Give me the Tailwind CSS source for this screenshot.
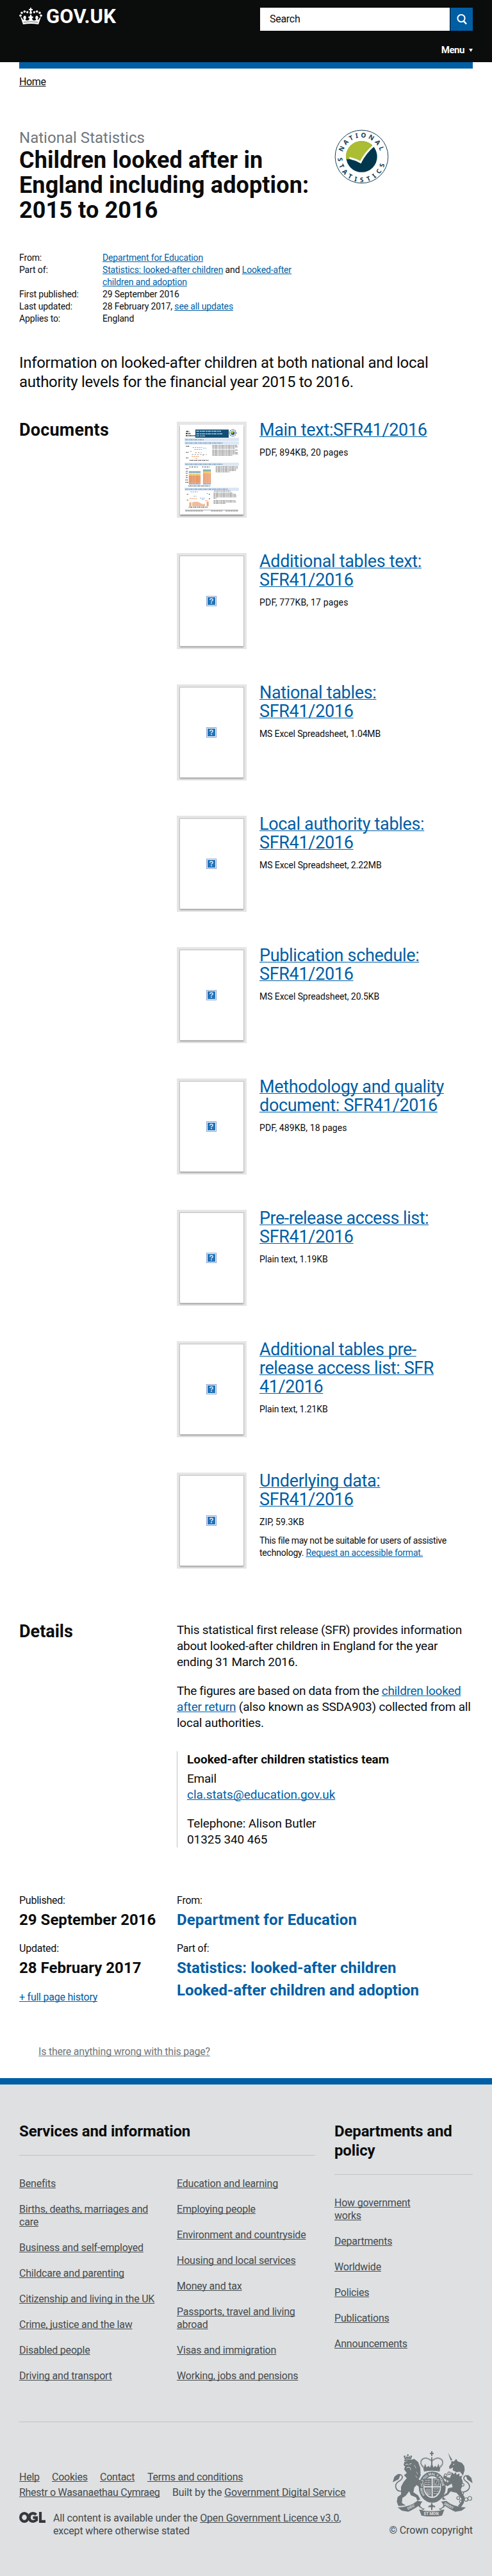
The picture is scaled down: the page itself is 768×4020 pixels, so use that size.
<!DOCTYPE html>
<html lang="en">
<head>
<meta charset="utf-8">
<title>Children looked after in England including adoption: 2015 to 2016 - GOV.UK</title>
<script src="https://cdn.jsdelivr.net/npm/@tailwindcss/browser@4"></script>
</head>
<body class="w-[768px] bg-white font-[Roboto,Arial,sans-serif] text-[#0b0c0c] [text-decoration-skip-ink:none]">

<svg class="hidden">
  <symbol id="missing" viewBox="0 0 16 16">
    <rect width="16" height="16" fill="#7f9fce"/><rect x="1" y="1" width="14" height="14" fill="#fff"/><rect x="2" y="2" width="12" height="12" fill="#2273b9"/>
    <path d="M5.8 6.2V5.6Q6 4.3 8 4.3T10.2 6Q10.200 7 9 7.600T8 9.200" fill="none" stroke="#e8f1fa" stroke-width="1.500"/><rect x="7.100" y="10.300" width="1.800" height="1.600" fill="#e8f1fa"/>
  </symbol>
</svg>

<header class="h-[97px] bg-[#0b0c0c] px-[30px] pt-3">
  <div class="flex h-9 items-start justify-between">
    <a class="flex items-start text-white" href="#">
      <svg class="h-[26px] w-9" viewBox="18 12 108 78" fill="#fff">
        <path d="M69 12h6v6h6v6h-6v6h-6v-6h-6v-6h6z"/>
        <circle cx="72" cy="35" r="6"/><circle cx="56" cy="33" r="5"/><circle cx="43" cy="30" r="5.500"/><circle cx="30" cy="36" r="5.500"/><circle cx="24" cy="49" r="5.500"/>
        <circle cx="88" cy="33" r="5"/><circle cx="101" cy="30" r="5.500"/><circle cx="114" cy="36" r="5.500"/><circle cx="120" cy="49" r="5.500"/>
        <path d="M24 55L36 90Q72 84 108 90L120 55L113 60Q107 74 103 65L108 61L104 50H96L93 62L98 65Q96 74 86 72Q78 70 78 61H83V53H77L74 44H70L67 53H61V61H66Q66 70 58 72Q48 74 46 65L51 62L48 50H40L36 61L41 65Q37 74 31 60Z"/>
        <path d="M38 80Q72 75 106 80" stroke="#0b0c0c" stroke-width="2" fill="none"/>
      </svg>
      <span class="-mt-[4px] ml-[6px] text-[31px] leading-[36px] font-bold tracking-[0.004em]">GOV.UK</span>
    </a>
    <div class="flex gap-[1px]">
      <div class="h-9 w-[296px] bg-white pl-[15px] text-base leading-9 tracking-[-0.017em]">Search</div>
      <div class="flex h-9 w-[35px] items-center justify-center bg-[#005ea5]">
        <svg class="h-[18px] w-[18px]" viewBox="0 0 18 18" fill="none" stroke="#fff"><circle cx="8" cy="7.500" r="5.600" stroke-width="2"/><path d="M11.500 11.500L16 16.500" stroke-width="2.600"/></svg>
      </div>
    </div>
  </div>
  <div class="mt-5 flex h-5 items-center justify-end gap-[7px] text-sm leading-5 font-bold text-white"><span class="text-[15px] tracking-[-0.03em]">Menu</span>
    <svg class="h-[5px] w-[6px]" viewBox="0 0 6 5"><path d="M0 0h6L3 5z" fill="#fff"/></svg></div>
</header>

<div class="px-[30px]">
  <div class="h-[10px] bg-[#005ea5]"></div>
  <nav class="mt-[11px] text-base leading-5 tracking-[-0.024em]"><a href="#" class="underline decoration-1 underline-offset-1">Home</a></nav>

  <main>
    <div class="mt-[62px] flex h-[147px]">
      <div class="w-[492px] whitespace-nowrap">
        <p class="text-[24px] leading-[30px] tracking-[0.001em] text-[#6f777b]">National Statistics</p>
        <h1 class="mt-px text-[36px] leading-[39px] font-bold tracking-[0.003em]">Children looked after in<br>England including adoption:<br>2015 to 2016</h1>
      </div>
      <svg class="mt-[2px] h-[85px] w-[85px]" viewBox="64 64 256 256">
        <circle cx="192" cy="192" r="124.500" fill="#fff" stroke="#0f3c52" stroke-width="3"/>
        <circle cx="192" cy="192" r="73" fill="#00374d"/>
        <path d="M119 203A73 73 0 0 1 243 140Q213 166 187 213Q160 201 134 196L132 205Z" fill="#aabd33"/>
        <path d="M134 198Q162 204 187 218Q210 173 249 140" fill="none" stroke="#fff" stroke-width="9"/>
        <path id="ns-top" d="M104 171A90.500 90.500 0 0 1 280 171" fill="none"/>
        <path id="ns-bot" d="M80 199A112 112 0 0 0 304 199" fill="none"/>
        <text font-family="Noto Sans" font-weight="700" font-size="30" letter-spacing="11" fill="#0f3c52"><textPath href="#ns-top">NATIONAL</textPath></text>
        <text font-family="Noto Sans" font-weight="700" font-size="30" letter-spacing="18" fill="#0f3c52"><textPath href="#ns-bot">STATISTICS</textPath></text>
      </svg>
    </div>

    <dl class="mt-[46px] grid grid-cols-[130px_1fr] text-sm leading-[19px] tracking-[-0.01em] whitespace-nowrap [&_a]:text-[#005ea5] [&_a]:underline [&_a]:decoration-1 [&_a]:underline-offset-1">
      <dt>From:</dt><dd><a href="#">Department for Education</a></dd>
      <dt>Part of:</dt><dd><a href="#">Statistics: looked-after children</a> and <a href="#">Looked-after<br>children and adoption</a></dd>
      <dt>First published:</dt><dd>29 September 2016</dd>
      <dt>Last updated:</dt><dd>28 February 2017, <a href="#">see all updates</a></dd>
      <dt>Applies to:</dt><dd>England</dd>
    </dl>

    <p class="mt-11 text-2xl leading-[30px] tracking-[-0.013em] whitespace-nowrap">Information on looked-after children at both national and local<br>authority levels for the financial year 2015 to 2016.</p>

    <section class="mt-[46px] flex">
      <h2 class="w-[246px] text-[27px] leading-[29px] font-bold tracking-[0.008em]">Documents</h2>
      <div class="[&_a]:text-[#005ea5] [&_a]:underline [&_a]:decoration-1 [&_a]:underline-offset-1 [&_article]:flex [&_article]:h-[205px] [&_article]:gap-5 [&_h3]:text-[27px] [&_h3]:leading-[29px] [&_h3]:tracking-[-0.012em] [&_h3]:whitespace-nowrap [&_p]:text-sm [&_p]:leading-[19px] [&_p]:whitespace-nowrap">
        <article>
          <div class="mt-px h-[150px] w-[109px] bg-[#e6e6e6] p-[5px]">
            <svg class="h-[140px] w-[99px] shadow-[0_2px_2px_rgba(0,0,0,0.4)]" viewBox="63 69 297 420">
              <rect x="63" y="69" width="297" height="420" fill="#fff"/>
              <path d="M92 100h14M90 110h22M90 120h44" stroke="#222" stroke-width="5" stroke-dasharray="9 3 5 2"/>
              <rect x="135" y="91" width="156" height="38" fill="#104e75"/>
              <path d="M139 99h116M139 111h124M139 121h42" stroke="#b8cfdf" stroke-width="4" stroke-dasharray="14 3 8 2"/>
              <circle cx="310" cy="107" r="15" fill="none" stroke="#0f3c52" stroke-width="4" stroke-dasharray="4 4"/><circle cx="310" cy="107" r="9" fill="#0f4c66"/><path d="M301 107a9 9 0 0 1 15-6l-7 10z" fill="#aabd33"/>
              <g fill="#dbe7f4" stroke="#c6d9ec"><rect x="85" y="131" width="253" height="13"/><rect x="85" y="148" width="253" height="13"/><rect x="85" y="247" width="253" height="13"/><rect x="85" y="364" width="253" height="13"/></g>
              <path d="M88 139h88M88 154h174M88 253h176M88 370h200" stroke="#4c7da3" stroke-width="3" stroke-dasharray="12 3 5 2"/>
              <path d="M214 166h116M214 172h119M214 178h108M214 187h120M214 193h108M214 199h120M214 205h122M214 211h95M230 265h103M230 271h105M230 277h98M230 283h96M230 289h66M222 379h78M220 388h90M220 394h104M220 400h108M220 406h108M220 412h14M220 424h102M220 430h107M220 436h57" stroke="#606060" stroke-width="2.500" stroke-dasharray="8 2 13 2 5 2"/>
              <path d="M90 169h16M91 198h12M91 224h11M108 235h88M90 274h12M90 286h10M90 295h10M90 307h10M90 316h10M88 327h12M88 338h14M102 355h103M95 394h8M95 421h8M198 394h6M198 415h6M104 454h88" stroke="#333" stroke-width="3" stroke-dasharray="5 2 9 3"/>
              <path d="M122 175h45M130 184h36M110 193h8M172 178h14M112 383h34M188 391h8M126 403h14M156 412h24M165 418h12" stroke="#78a9da" stroke-width="3" stroke-dasharray="7 3"/>
              <path d="M118 217h34M136 226h10M168 211h8M108 414h34M182 424h12" stroke="#e98543" stroke-width="3" stroke-dasharray="6 3"/>
              <path d="M134 199h30M118 208h70" stroke="#999" stroke-width="3" stroke-dasharray="7 6"/>
              <g fill="none" stroke-dasharray="4 1.500"><path d="M105 345h55M171 345h36" stroke="#6f9dcc" stroke-width="7"/><path d="M105 323h55" stroke="#e07a3b" stroke-width="37"/><path d="M171 318h36" stroke="#e58b55" stroke-width="46"/><path d="M105 300h55M171 291h36" stroke="#e8bb36" stroke-width="8"/><path d="M105 291h55M171 284h36" stroke="#588fca" stroke-width="6"/><path d="M105 288h55M171 280h36" stroke="#77aa58" stroke-width="5"/></g>
              <path d="M108 266h38M168 266h34" stroke="#566" stroke-width="6" stroke-dasharray="3 5 2 2"/>
              <path d="M109 450v-18M114 450v-18M123 450v-19M129 450v-21M135 450v-20M141 450v-21M147 450v-20M153 450v-18M159 450v-14M165 450v-12M171 450v-9M177 450v-12M190 450v-22M195 450v-22" stroke="#eb9a68" stroke-width="4"/>
              <path d="M86 468h250" stroke="#777" stroke-width="2"/><path d="M88 472h82M208 472h54M276 472h60" stroke="#555" stroke-width="2.500" stroke-dasharray="10 2"/>
            </svg>
          </div>
          <div><h3><a href="#">Main text:SFR41/2016</a></h3><p class="mt-[11px] tracking-[0.013em]">PDF, 894KB, 20 pages</p></div>
        </article>
        <article>
          <div class="mt-px h-[150px] w-[109px] bg-[#e6e6e6] p-[5px]"><div class="flex h-[140px] w-[99px] items-center justify-center bg-white shadow-[0_0_1px_1px_#c2c4c4,0_2px_2px_rgba(0,0,0,0.4)]"><svg class="mr-[1px] size-4"><use href="#missing"/></svg></div></div>
          <div><h3><a href="#">Additional tables text:<br>SFR41/2016</a></h3><p class="mt-[11px] tracking-[0.013em]">PDF, 777KB, 17 pages</p></div>
        </article>
        <article>
          <div class="mt-px h-[150px] w-[109px] bg-[#e6e6e6] p-[5px]"><div class="flex h-[140px] w-[99px] items-center justify-center bg-white shadow-[0_0_1px_1px_#c2c4c4,0_2px_2px_rgba(0,0,0,0.4)]"><svg class="mr-[1px] size-4"><use href="#missing"/></svg></div></div>
          <div><h3><a href="#">National tables:<br>SFR41/2016</a></h3><p class="mt-[11px] tracking-[-0.010em]">MS Excel Spreadsheet, 1.04MB</p></div>
        </article>
        <article>
          <div class="mt-px h-[150px] w-[109px] bg-[#e6e6e6] p-[5px]"><div class="flex h-[140px] w-[99px] items-center justify-center bg-white shadow-[0_0_1px_1px_#c2c4c4,0_2px_2px_rgba(0,0,0,0.4)]"><svg class="mr-[1px] size-4"><use href="#missing"/></svg></div></div>
          <div><h3><a href="#">Local authority tables:<br>SFR41/2016</a></h3><p class="mt-[11px] tracking-[-0.006em]">MS Excel Spreadsheet, 2.22MB</p></div>
        </article>
        <article>
          <div class="mt-px h-[150px] w-[109px] bg-[#e6e6e6] p-[5px]"><div class="flex h-[140px] w-[99px] items-center justify-center bg-white shadow-[0_0_1px_1px_#c2c4c4,0_2px_2px_rgba(0,0,0,0.4)]"><svg class="mr-[1px] size-4"><use href="#missing"/></svg></div></div>
          <div><h3><a href="#">Publication schedule:<br>SFR41/2016</a></h3><p class="mt-[11px] tracking-[-0.006em]">MS Excel Spreadsheet, 20.5KB</p></div>
        </article>
        <article>
          <div class="mt-px h-[150px] w-[109px] bg-[#e6e6e6] p-[5px]"><div class="flex h-[140px] w-[99px] items-center justify-center bg-white shadow-[0_0_1px_1px_#c2c4c4,0_2px_2px_rgba(0,0,0,0.4)]"><svg class="mr-[1px] size-4"><use href="#missing"/></svg></div></div>
          <div><h3><a href="#">Methodology and quality<br>document: SFR41/2016</a></h3><p class="mt-[11px] tracking-[0.006em]">PDF, 489KB, 18 pages</p></div>
        </article>
        <article>
          <div class="mt-px h-[150px] w-[109px] bg-[#e6e6e6] p-[5px]"><div class="flex h-[140px] w-[99px] items-center justify-center bg-white shadow-[0_0_1px_1px_#c2c4c4,0_2px_2px_rgba(0,0,0,0.4)]"><svg class="mr-[1px] size-4"><use href="#missing"/></svg></div></div>
          <div><h3><a href="#" class="tracking-[-0.018em]">Pre-release access list:</a><br><a href="#">SFR41/2016</a></h3><p class="mt-[11px] tracking-[-0.01em]">Plain text, 1.19KB</p></div>
        </article>
        <article>
          <div class="mt-px h-[150px] w-[109px] bg-[#e6e6e6] p-[5px]"><div class="flex h-[140px] w-[99px] items-center justify-center bg-white shadow-[0_0_1px_1px_#c2c4c4,0_2px_2px_rgba(0,0,0,0.4)]"><svg class="mr-[1px] size-4"><use href="#missing"/></svg></div></div>
          <div><h3><a href="#" class="tracking-[-0.016em]">Additional tables pre-<br>release access list: SFR<br>41/2016</a></h3><p class="mt-[11px] tracking-[-0.01em]">Plain text, 1.21KB</p></div>
        </article>
        <article>
          <div class="mt-px h-[150px] w-[109px] bg-[#e6e6e6] p-[5px]"><div class="flex h-[140px] w-[99px] items-center justify-center bg-white shadow-[0_0_1px_1px_#c2c4c4,0_2px_2px_rgba(0,0,0,0.4)]"><svg class="mr-[1px] size-4"><use href="#missing"/></svg></div></div>
          <div><h3><a href="#">Underlying data:<br>SFR41/2016</a></h3><p class="mt-[11px]">ZIP, 59.3KB</p><p class="mt-[10px] tracking-[-0.022em]">This file may not be suitable for users of assistive<br><span class="tracking-[-0.015em]">technology. <a href="#">Request an accessible format.</a></span></p></div>
        </article>
      </div>
    </section>

    <section class="mt-[29px] flex">
      <h2 class="mt-px w-[246px] text-[27px] leading-[29px] font-bold">Details</h2>
      <div class="text-[19px] leading-[25px] tracking-[-0.013em] whitespace-nowrap [&_a]:text-[#005ea5] [&_a]:underline [&_a]:decoration-1 [&_a]:underline-offset-1">
        <p>This statistical first release (SFR) provides information<br>about looked-after children in England for the year<br>ending 31 March 2016.</p>
        <p class="mt-5"><span class="tracking-[-0.017em]">The figures are based on data from the <a href="#">children looked</a></span><br><span class="tracking-[-0.009em]"><a href="#">after return</a> (also known as SSDA903) collected from all</span><br>local authorities.</p>
        <div class="mt-8 h-[150px] border-l border-[#bfc1c3] pl-[15px]">
          <h3 class="-mt-[2px] inline-block font-bold tracking-[-0.001em]">Looked-after children statistics team</h3>
          <p class="mt-[5px]">Email<br><a href="#" class="tracking-[-0.003em]">cla.stats@education.gov.uk</a></p>
          <p class="mt-5 tracking-[-0.006em]">Telephone: Alison Butler<br>01325 340 465</p>
        </div>
      </div>
    </section>

    <section class="mt-[73px] flex h-[171px] text-base leading-5 tracking-[-0.015em]">
      <div class="w-[246px]">
        <p>Published:</p><p class="mt-[5px] text-2xl leading-[30px] font-bold tracking-[0.001em]">29 September 2016</p>
        <p class="mt-5">Updated:</p><p class="mt-[5px] text-2xl leading-[30px] font-bold tracking-[0.001em]">28 February 2017</p>
        <p class="mt-[21px]"><a href="#" class="text-[#005ea5] underline decoration-1 underline-offset-1">+ full page history</a></p>
      </div>
      <div class="[&_a]:text-2xl [&_a]:leading-[30px] [&_a]:font-bold [&_a]:text-[#005ea5] [&_a]:block [&_a]:mt-[5px]">
        <p>From:</p><a href="#" class="tracking-[0.006em]">Department for Education</a>
        <p class="mt-5">Part of:</p><a href="#" class="tracking-[0.002em]">Statistics: looked-after children</a><a href="#" class="tracking-[-0.002em]">Looked-after children and adoption</a>
      </div>
    </section>
    <p class="mt-[65px] ml-[30px] text-base leading-5 tracking-[-0.014em]"><a href="#" class="text-[#6f777b] underline decoration-1 underline-offset-1">Is there anything wrong with this page?</a></p>
  </main>
</div>

<footer class="mt-[31px] h-[777px] border-t-[10px] border-[#005ea5] bg-[#dee0e2] px-[30px] pt-[58px] text-base leading-5 tracking-[-0.013em] text-[#454a4c] [&_a]:underline [&_a]:decoration-1 [&_a]:underline-offset-1">
  <div class="flex h-[469px] gap-[30px] border-b border-[#bfc1c3] whitespace-nowrap [&_li]:mb-5">
    <div class="w-[462px]">
      <h2 class="h-[53px] border-b border-[#bfc1c3] text-2xl leading-[30px] font-bold tracking-[-0.006em] text-[#0b0c0c]">Services and information</h2>
      <div class="mt-[34px] flex">
        <ul class="w-[246px]">
          <li><a href="#">Benefits</a></li><li><a href="#">Births, deaths, marriages and<br>care</a></li><li><a href="#">Business and self-employed</a></li><li><a href="#">Childcare and parenting</a></li><li><a href="#">Citizenship and living in the UK</a></li><li><a href="#">Crime, justice and the law</a></li><li><a href="#">Disabled people</a></li><li><a href="#">Driving and transport</a></li>
        </ul>
        <ul>
          <li><a href="#">Education and learning</a></li><li><a href="#">Employing people</a></li><li><a href="#">Environment and countryside</a></li><li><a href="#">Housing and local services</a></li><li><a href="#">Money and tax</a></li><li><a href="#">Passports, travel and living<br>abroad</a></li><li><a href="#">Visas and immigration</a></li><li><a href="#">Working, jobs and pensions</a></li>
        </ul>
      </div>
    </div>
    <div class="w-[216px]">
      <h2 class="h-[83px] border-b border-[#bfc1c3] text-2xl leading-[30px] font-bold tracking-[-0.006em] text-[#0b0c0c]">Departments and<br>policy</h2>
      <ul class="mt-[34px]">
        <li><a href="#">How government<br>works</a></li><li><a href="#">Departments</a></li><li><a href="#">Worldwide</a></li><li><a href="#">Policies</a></li><li><a href="#">Publications</a></li><li><a href="#">Announcements</a></li>
      </ul>
    </div>
  </div>

  <div class="flex justify-between pt-[45px] whitespace-nowrap">
    <div class="pt-[31px]">
      <ul class="flex tracking-[-0.015em]"><li class="w-[51px]"><a href="#">Help</a></li><li class="w-[75px]"><a href="#">Cookies</a></li><li class="w-[74px]"><a href="#">Contact</a></li><li><a href="#">Terms and conditions</a></li></ul>
      <ul class="mt-1 flex"><li class="w-[239px] tracking-[-0.018em]"><a href="#">Rhestr o Wasanaethau Cymraeg</a></li><li class="tracking-[-0.007em]">Built by the <a href="#">Government Digital Service</a></li></ul>
      <div class="mt-5 flex">
        <svg class="mr-3 h-[17px] w-[41px]" viewBox="0 0 41 17" fill="none" stroke="#36393b" stroke-width="4.200"><ellipse cx="8" cy="8.500" rx="5.900" ry="6.400"/><path d="M26.500 4.400Q24.500 2.100 21.500 2.100Q15.800 2.300 15.800 8.500T21.500 14.900Q24.500 14.900 27 12.500V8.800H21.500M33 0V14.900H41"/></svg>
        <p class="tracking-[-0.009em]">All content is available under the <a href="#">Open Government Licence v3.0</a>,<br>except where otherwise stated</p>
      </div>
    </div>
    <div class="flex flex-col items-end">
      <svg class="h-[102px] w-[125px]" viewBox="69 43 375 306" fill="#6f777b" stroke="none">
        <path d="M249 44h6v7h6v6h-6v9h-6v-9h-6v-6h6z"/>
        <path d="M212 118Q194 100 205 84Q224 66 252 90Q280 66 299 84Q310 100 292 118" fill="none" stroke="#6f777b" stroke-width="6" stroke-dasharray="5 1.500"/>
        <path d="M249 72h6v38h-6zM210 108l5 12 6-18 7 18 8-8 8 8 8-22 8 22 8-8 8 8 7-18 6 18 5-12-4 24H214z"/>
        <path d="M214 133Q252 124 290 133L288 139Q252 131 216 139Z"/>
        <ellipse cx="254" cy="212" rx="52" ry="62" fill="none" stroke="#6f777b" stroke-width="22"/>
        <path id="garter" d="M219 248A46 56 0 1 1 289 248" fill="none"/>
        <text font-family="Roboto" font-weight="700" font-size="15" fill="#dee0e2"><textPath href="#garter">HONI SOIT QUI MAL Y PENSE</textPath></text>
        <path d="M217 171h34v36h-34zM257 171h34v36h-34zM217 213h34v44q-30-8-34-44zM257 213h34q-4 36-34 44z"/>
        <path d="M221 180h26M221 190h26M221 200h26M262 220h25M262 231h23M262 242h18" stroke="#dee0e2" stroke-width="3" stroke-dasharray="6 2 3 2"/>
        <path d="M263 176h22v26h-22zM268 202l13-26M226 220q-4 24 18 28M232 219v26M238 219v28M244 219v28" fill="none" stroke="#dee0e2" stroke-width="2"/>
        <path d="M120 68l6 14q14-6 28 0l6-14-9 6-5-9-5 9-5-9-5 9z"/><circle cx="140" cy="62" r="4"/><circle cx="125" cy="68" r="4"/><circle cx="155" cy="68" r="4"/><path d="M122 84q16-5 34 0l-2 7q-15-4-30 0z"/>
        <path d="M124 94Q144 86 170 80L188 94L198 122L200 158L190 176L208 185L206 196L193 194L203 206L200 216L181 202L170 214L166 236L188 251L198 269L185 276L178 260L154 250L146 231L130 252L114 263L112 286L130 298L96 300L88 280L92 258L108 246L108 210L120 188L135 170L122 156L135 146L122 128L127 116L120 108Z"/>
        <path d="M128 107q9-7 15 1M147 104l10-2M134 122q8-7 18-1M150 124l5 7" fill="none" stroke="#dee0e2" stroke-width="3"/><path d="M180 140l7 12M176 158l8 11M170 108l8 16" stroke="#dee0e2" stroke-width="2"/>
        <path d="M113 230Q88 235 83 211Q80 192 105 180Q120 168 111 157Q101 148 91 158" fill="none" stroke="#6f777b" stroke-width="5"/><path d="M69 189L77 163L94 150L105 155L97 175Z"/>
        <path d="M328 51L348 84L341 88Z"/><path d="M344 90L356 92L366 80L374 92L392 98L404 113L406 132L398 158L384 140L368 142L350 133L352 120L335 127L333 116L343 101Z"/><circle cx="355" cy="105" r="2.500" fill="#dee0e2"/>
        <path d="M344 141l12 10 8-9 5 13 12-8 1 15 13-4-6 18q-30-5-46-21z"/>
        <path d="M342 154Q368 174 392 171Q404 195 388 222L394 240L406 258L402 286L388 307L374 301L390 281L391 266L368 239L340 232L328 247L306 258L318 271L301 270L302 254L324 238L328 218L350 212L345 195L326 207L313 201L301 181L318 187L327 193L336 184L320 177L306 170L307 158L322 165L338 168Z"/>
        <g fill="none" stroke="#6f777b" stroke-width="3.500"><circle cx="333" cy="147" r="6"/><circle cx="317" cy="156" r="6"/><circle cx="326" cy="184" r="6"/><circle cx="397" cy="201" r="6" fill="#dee0e2"/><circle cx="395" cy="240" r="6"/><circle cx="376" cy="263" r="7"/><circle cx="389" cy="279" r="7"/><circle cx="413" cy="270" r="8"/><circle cx="430" cy="265" r="9"/></g>
        <path d="M398 236Q428 230 429 209Q428 194 410 183Q398 174 404 163Q413 154 422 163" fill="none" stroke="#6f777b" stroke-width="5"/><path d="M443 194L437 168L422 155L413 160L418 176Z"/>
        <path d="M92 307Q150 306 184 276L206 279Q196 294 198 310L190 300Q162 318 142 327L112 322Z"/><path d="M412 307Q354 306 320 276L298 279Q308 294 306 310L314 300Q342 318 362 327L392 322Z"/>
        <path d="M194 319Q252 331 310 319L300 345Q252 355 204 345Z"/><path d="M206 280q-17 14-8 24t17 10q-8 9-21 5M298 280q17 14 8 24t-17 10q8 9 21 5" fill="none" stroke="#6f777b" stroke-width="4"/>
        <path d="M249 287h6v33h-6zM237 308q-3-12 8-10l7-10 7 10q11-2 8 10l-8-4-7 8-7-8z"/>
        <g font-family="Roboto" font-weight="700" font-size="17" fill="#dee0e2"><text transform="translate(141 319) rotate(-29)">DIEU</text><text transform="translate(308 293) rotate(29)">DROIT</text><text x="215" y="344" font-size="19">ET MON</text></g>
      </svg>
      <p class="mt-[12px] tracking-[-0.007em]">© Crown copyright</p>
    </div>
  </div>
</footer>
</body>
</html>
